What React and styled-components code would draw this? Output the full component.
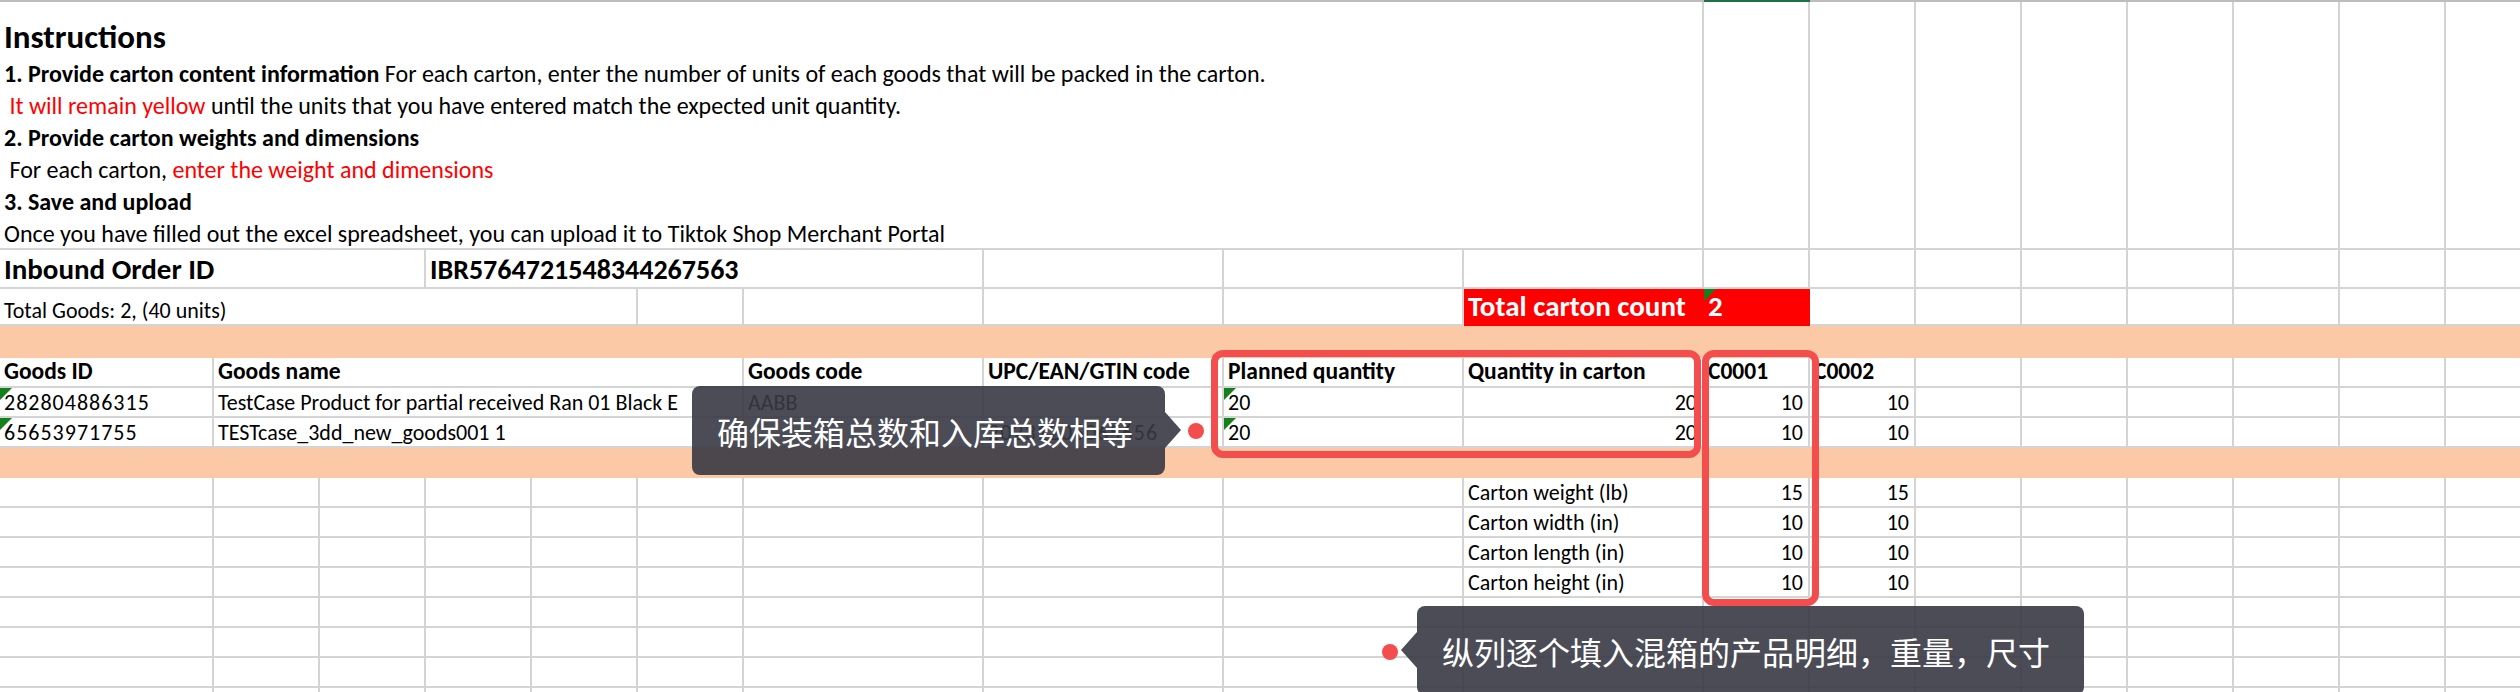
import React from 'react';
import styled, { createGlobalStyle, css } from 'styled-components';

const GRID = '#d4d4d4';
const PEACH = '#fcc9a7';
const MARK = '#f44d4d';

const GlobalStyle = createGlobalStyle`
  html, body {
    margin: 0;
    padding: 0;
    background: #fff;
    overflow: hidden;
  }
  body {
    font-family: Carlito, Lato, "Noto Sans", sans-serif;
    color: #000;
  }
`;

const Page = styled.div`
  position: relative;
  width: 2520px;
  height: 692px;
  overflow: hidden;
`;

const Sheet = styled.div`
  display: grid;
  grid-template-columns: 214px repeat(5, 106px) repeat(4, 240px) repeat(8, 106px);
  grid-template-rows: 2px 248px 39px 37px 32px repeat(4, 30px) repeat(8, 30px);
`;

const Edge = styled.div`
  grid-column: span ${(p) => p.$span || 1};
  background: ${(p) => (p.$active ? '#1e7145' : '#bdbdbd')};
`;

const Cell = styled.div`
  position: relative;
  grid-column: span ${(p) => p.$span || 1};
  box-sizing: border-box;
  border-right: 2px solid ${GRID};
  border-bottom: 2px solid ${GRID};
  display: flex;
  align-items: flex-end;
  justify-content: ${(p) => (p.$right ? 'flex-end' : 'flex-start')};
  padding: 0 ${(p) => (p.$right ? 5 : 4)}px 1px 4px;
  font-size: ${(p) => p.$size || 22}px;
  line-height: 1.15;
  font-weight: ${(p) => (p.$bold ? 700 : 400)};
  letter-spacing: ${(p) => (p.$digits ? '1px' : 'normal')};
  white-space: nowrap;
  overflow: visible;
  ${(p) =>
    p.$fill &&
    css`
      background: ${p.$fill};
      color: #fff;
      border-color: ${p.$fill};
    `}
  ${(p) =>
    p.$flag &&
    css`
      &::before {
        content: '';
        position: absolute;
        left: 0;
        top: 0;
        border-top: 12px solid #14801c;
        border-right: 12px solid transparent;
      }
    `}
`;

const Band = styled.div`
  grid-column: 1 / -1;
  background: ${PEACH};
`;

const Notes = styled(Cell)`
  display: block;
  padding: 15px 0 0 4px;
  font-size: 24px;
  line-height: 32px;
`;

const Heading = styled.div`
  font-size: 33px;
  font-weight: 700;
  line-height: 40px;
  margin-bottom: 1px;
`;

const Line = styled.div`
  white-space: pre;
`;

const Strong = styled.span`
  font-weight: 700;
`;

const Alert = styled.span`
  color: #ff0000;
`;

const Frame = styled.div`
  position: absolute;
  left: ${(p) => p.$x}px;
  top: ${(p) => p.$y}px;
  width: ${(p) => p.$w}px;
  height: ${(p) => p.$h}px;
  box-sizing: border-box;
  border: 7px solid ${MARK};
  border-radius: 12px;
`;

const Callout = styled.div`
  position: absolute;
  left: ${(p) => p.$x}px;
  top: ${(p) => p.$y}px;
  width: ${(p) => p.$w}px;
  height: 89px;
  box-sizing: border-box;
  display: flex;
  align-items: center;
  padding: 0 0 0 25px;
  border-radius: 8px;
  background: rgba(55, 56, 67, 0.9);
  color: #fff;
  font-family: "Noto Sans CJK SC", "Noto Sans", sans-serif;
  font-size: 32px;
  white-space: nowrap;

  &::after {
    content: '';
    position: absolute;
    top: 26px;
    border-top: 18px solid transparent;
    border-bottom: 18px solid transparent;
    ${(p) =>
      p.$side === 'right'
        ? css`
            left: 100%;
            border-left: 16px solid rgba(55, 56, 67, 0.9);
          `
        : css`
            right: 100%;
            border-right: 16px solid rgba(55, 56, 67, 0.9);
          `}
  }
`;

const Dot = styled.div`
  position: absolute;
  left: ${(p) => p.$x - 8}px;
  top: ${(p) => p.$y - 8}px;
  width: 16px;
  height: 16px;
  border-radius: 50%;
  background: ${MARK};
`;

const blanks = (n, key) =>
  Array.from({ length: n }, (_, i) => <Cell key={`${key}-${i}`} />);

const goods = [
  {
    id: '282804886315',
    name: 'TestCase Product for partial received Ran 01 Black E',
    code: 'AABB',
    upc: '',
  },
  {
    id: '65653971755',
    name: 'TESTcase_3dd_new_goods001 1',
    code: '',
    upc: '20231206065656',
  },
];

const dims = [
  ['Carton weight (lb)', 15, 15],
  ['Carton width (in)', 10, 10],
  ['Carton length (in)', 10, 10],
  ['Carton height (in)', 10, 10],
];

export default function App() {
  return (
    <Page>
      <GlobalStyle />
      <Sheet>
        <Edge $span={10} />
        <Edge $active />
        <Edge $span={7} />

        <Notes $span={10}>
          <Heading>Instructions</Heading>
          <Line>
            <Strong>1. Provide carton content information</Strong> For each carton,
            enter the number of units of each goods that will be packed in the carton.
          </Line>
          <Line>
            <Alert> It will remain yellow</Alert> until the units that you have entered
            match the expected unit quantity.
          </Line>
          <Line>
            <Strong>2. Provide carton weights and dimensions</Strong>
          </Line>
          <Line>
            {' For each carton, '}
            <Alert>enter the weight and dimensions</Alert>
          </Line>
          <Line>
            <Strong>3. Save and upload</Strong>
          </Line>
          <Line>
            Once you have filled out the excel spreadsheet, you can upload it to Tiktok
            Shop Merchant Portal
          </Line>
        </Notes>
        {blanks(8, 'r1')}

        <Cell $span={3} $bold $size={29}>
          Inbound Order ID
        </Cell>
        <Cell $span={4} $bold $size={28}>
          IBR5764721548344267563
        </Cell>
        {blanks(11, 'r2')}

        <Cell $span={5} $size={22}>
          Total Goods: 2, (40 units)
        </Cell>
        {blanks(4, 'r3a')}
        <Cell $bold $size={29} $fill="#ff0000">
          Total carton count
        </Cell>
        <Cell $bold $size={29} $fill="#ff0000" $flag>
          2
        </Cell>
        {blanks(7, 'r3b')}

        <Band />

        <Cell $bold $size={23.5}>Goods ID</Cell>
        <Cell $span={5} $bold $size={23.5}>
          Goods name
        </Cell>
        <Cell $bold $size={23.5}>Goods code</Cell>
        <Cell $bold $size={23.5}>UPC/EAN/GTIN code</Cell>
        <Cell $bold $size={23.5}>Planned quantity</Cell>
        <Cell $bold $size={23.5}>Quantity in carton</Cell>
        <Cell $bold $size={23.5}>C0001</Cell>
        <Cell $bold $size={23.5}>C0002</Cell>
        {blanks(6, 'hd')}

        {goods.map((g) => (
          <React.Fragment key={g.id}>
            <Cell $flag $digits>
              {g.id}
            </Cell>
            <Cell $span={5}>{g.name}</Cell>
            <Cell>{g.code}</Cell>
            <Cell $digits>{g.upc}</Cell>
            <Cell $flag>20</Cell>
            <Cell $right>20</Cell>
            <Cell $right>10</Cell>
            <Cell $right>10</Cell>
            {blanks(6, g.id)}
          </React.Fragment>
        ))}

        <Band />

        {dims.map(([label, a, b]) => (
          <React.Fragment key={label}>
            {blanks(9, label)}
            <Cell>{label}</Cell>
            <Cell $right>{a}</Cell>
            <Cell $right>{b}</Cell>
            {blanks(6, `${label}-r`)}
          </React.Fragment>
        ))}

        {blanks(18 * 4, 'tail')}
      </Sheet>

      <Frame $x={1211} $y={350} $w={490} $h={108} />
      <Frame $x={1702} $y={350} $w={117} $h={256} />

      <Callout $x={692} $y={386} $w={473} $side="right">
        确保装箱总数和入库总数相等
      </Callout>
      <Dot $x={1196} $y={431} />

      <Callout $x={1417} $y={606} $w={667} $side="left">
        纵列逐个填入混箱的产品明细，重量，尺寸
      </Callout>
      <Dot $x={1390} $y={652} />
    </Page>
  );
}
